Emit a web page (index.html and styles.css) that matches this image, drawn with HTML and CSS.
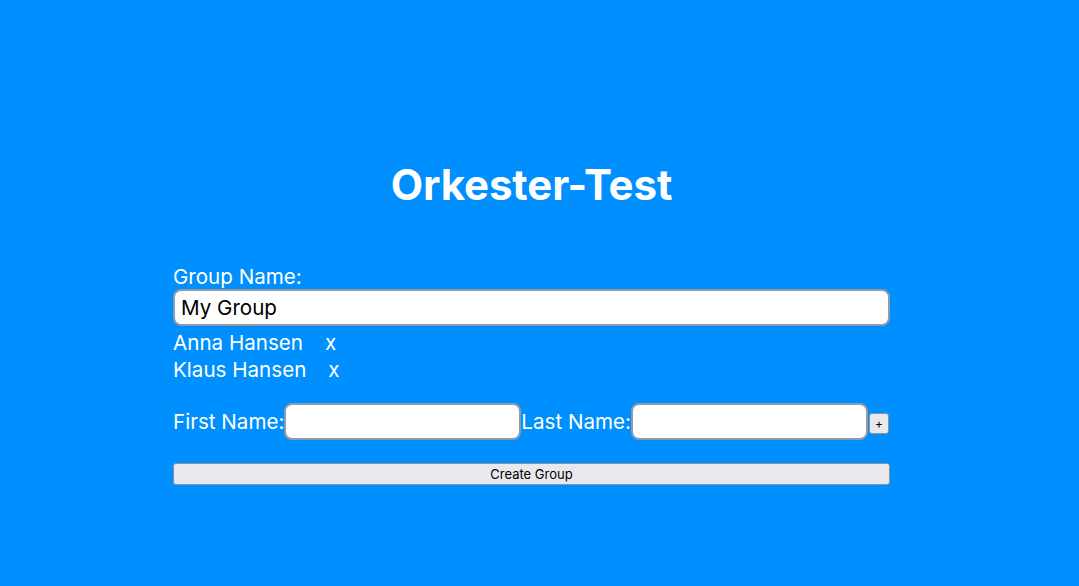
FILE: index.html
```html
<!DOCTYPE html>
<html>
<head>
<meta charset="utf-8">
<link rel="stylesheet" href="styles.css">
</head>
<body>
<div class="app">
  <h1 class="title">Orkester-Test</h1>
  <div class="form">
    <label class="label">Group Name:</label>
    <input class="group-input" type="text" value="My Group">
    <ul class="members">
      <li class="member"><span>Anna Hansen</span><span class="remove">x</span></li>
      <li class="member"><span>Klaus Hansen</span><span class="remove">x</span></li>
    </ul>
    <div class="add-row">
      <label class="label">First Name:</label><input class="name-input" type="text"><label class="label">Last Name:</label><input class="name-input" type="text"><button class="add-btn">+</button>
    </div>
    <button class="create-btn">Create Group</button>
  </div>
</div>
</body>
</html>
```
FILE: styles.css
```css
html, body {
  margin: 0;
  padding: 0;
  background: #008ffe;
  height: 100%;
}
body {
  font-family: Inter, "Noto Sans", sans-serif;
  color: #ffffff;
}
.app {
  width: 717px;
  margin-left: 173px;
  padding-top: 160px;
}
.title {
  margin: 0;
  text-align: center;
  font-size: 42px;
  font-weight: 700;
  line-height: 50px;
  letter-spacing: -0.1px;
}
.form {
  margin-top: 55px;
  display: flex;
  flex-direction: column;
}
.label {
  font-size: 20.6px;
  line-height: 24px;
  font-weight: 400;
  white-space: nowrap;
  flex-shrink: 0;
}
.group-input {
  box-sizing: border-box;
  width: 717px;
  height: 37px;
  margin-top: 0;
  border: 2px solid #8e9bab;
  border-radius: 8px;
  background: #fff;
  font-family: Inter, "Noto Sans", sans-serif;
  font-size: 20.6px;
  padding: 0 6px;
  color: #000;
  outline: none;
}
.members {
  list-style: none;
  margin: 3px 0 0;
  padding: 0;
}
.member {
  font-size: 20.6px;
  line-height: 27px;
}
.remove {
  margin-left: 22px;
}
.add-row {
  margin-top: 20px;
  display: flex;
  align-items: center;
}
.name-input {
  box-sizing: border-box;
  width: 237px;
  min-width: 0;
  flex-shrink: 1;
  height: 37px;
  border: 2px solid #8e9bab;
  border-radius: 8px;
  background: #fff;
  outline: none;
  font-size: 18px;
}
.add-btn {
  box-sizing: border-box;
  flex-shrink: 0;
  width: 20px;
  height: 21px;
  margin-left: 1px;
  margin-top: 4px;
  padding: 0;
  border: 1px solid #8f8f9d;
  border-radius: 3px;
  background: #e9e9ed;
  font-family: Inter, sans-serif;
  font-size: 12px;
  color: #000;
  line-height: 1;
}
.create-btn {
  box-sizing: border-box;
  margin-top: 23px;
  width: 717px;
  height: 22px;
  border: 1px solid #8f8f9d;
  border-radius: 3px;
  background: #e9e9ed;
  font-family: Inter, sans-serif;
  font-size: 13px;
  color: #000;
  padding: 0;
}
```
